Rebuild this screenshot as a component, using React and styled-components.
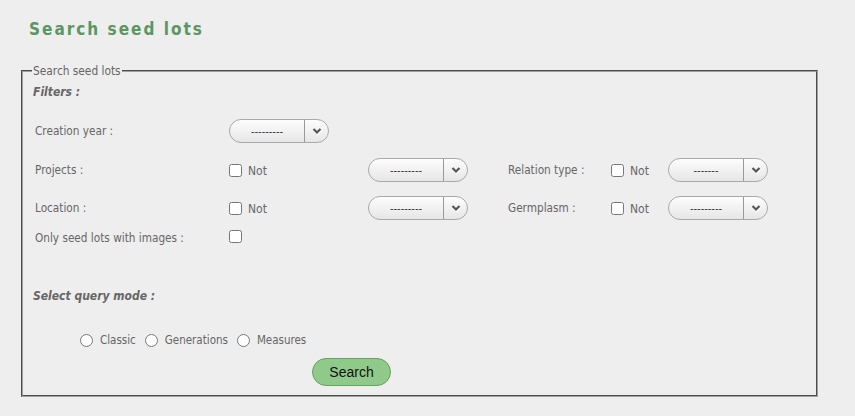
import React from "react";
import styled, { createGlobalStyle } from "styled-components";

const Global = createGlobalStyle`
  html, body { margin: 0; padding: 0; background: #eeeeee; }
  body { font-family: "DejaVu Sans Condensed", "DejaVu Sans", Tahoma, sans-serif; color: #666; }
`;

const Page = styled.div`
  padding: 19px 37px 20px 21px;
`;

const Title = styled.h1`
  margin: 0 0 25px 8px;
  font-family: "DejaVu Sans Condensed", "DejaVu Sans", sans-serif;
  font-size: 17px;
  line-height: 20px;
  font-weight: bold;
  letter-spacing: 2px;
  color: #5b9663;
`;

const Fieldset = styled.fieldset`
  margin: 0;
  padding: 0 10px 9px 10px;
  border: 2px groove #a0a0a0;
  min-width: 0;
`;

const Legend = styled.legend`
  padding: 0 1px;
  margin-left: -1px;
  font-size: 11.8px;
  line-height: 14px;
  color: #666;
`;

const Heading = styled.div`
  margin-top: ${(p) => p.$top}px;
  font-size: 12px;
  line-height: 14px;
  font-weight: bold;
  font-style: italic;
  color: #666;
`;

const FilterRow = styled.div`
  display: grid;
  grid-template-columns: 194px 139px 140px 103px 57px 100px;
  align-items: center;
  height: 24px;
  margin-top: ${(p) => p.$top}px;
  padding-left: 2px;
`;

const Label = styled.span`
  font-size: 11.7px;
  color: #666;
`;

const NotWrap = styled.label`
  display: flex;
  align-items: center;
  gap: 6px;
  font-size: 12px;
  color: #666;
  padding-top: 2px;
`;

const Check = styled.input.attrs({ type: "checkbox" })`
  margin: 0;
  width: 13px;
  height: 13px;
  position: relative;
  top: -1px;
`;

const SelectBox = styled.div`
  display: flex;
  width: 100px;
  height: 24px;
  box-sizing: border-box;
  border: 1px solid #a9a9a9;
  border-radius: 12px;
  background: linear-gradient(#fdfdfd, #e6e6e6);
  overflow: hidden;
`;

const SelectText = styled.div`
  flex: 0 0 74px;
  display: flex;
  align-items: center;
  justify-content: center;
  font-size: 11px;
  color: #333;
  border-right: 1px solid #999;
`;

const SelectArrow = styled.div`
  flex: 1;
  display: flex;
  align-items: center;
  justify-content: center;
`;

const Select = ({ text }) => (
  <SelectBox>
    <SelectText>{text}</SelectText>
    <SelectArrow>
      <svg width="10" height="8" viewBox="0 0 10 8">
        <path d="M1.5 2.5 L5 6 L8.5 2.5" fill="none" stroke="#fff" strokeWidth="2.2" transform="translate(0.6,0.6)" />
        <path d="M1.5 2 L5 5.5 L8.5 2" fill="none" stroke="#555" strokeWidth="2.2" />
      </svg>
    </SelectArrow>
  </SelectBox>
);

const Not = () => (
  <NotWrap>
    <Check />
    Not
  </NotWrap>
);

const RadioRow = styled.div`
  display: flex;
  align-items: center;
  margin-top: 29px;
  margin-left: 47px;
  height: 16px;
`;

const RadioItem = styled.label`
  display: flex;
  align-items: center;
  gap: 7px;
  margin-right: 9px;
  font-size: 11.5px;
  color: #666;
`;

const Radio = styled.input.attrs({ type: "radio", name: "mode" })`
  margin: 0;
  width: 13px;
  height: 13px;
`;

const Button = styled.button`
  display: block;
  margin: 10px 0 0 279px;
  width: 79px;
  height: 28px;
  border: 1px solid #64a360;
  border-radius: 14px;
  background: #8fca8b;
  font-family: "Liberation Sans", Arial, sans-serif;
  font-size: 14px;
  color: #111;
  padding: 0;
`;

export default function App() {
  return (
    <Page>
      <Global />
      <Title>Search seed lots</Title>
      <Fieldset>
        <Legend>Search seed lots</Legend>
        <Heading $top={7}>Filters :</Heading>
        <FilterRow $top={20}>
          <Label>Creation year :</Label>
          <Select text="---------" />
        </FilterRow>
        <FilterRow $top={15}>
          <Label>Projects :</Label>
          <Not />
          <Select text="---------" />
          <Label>Relation type :</Label>
          <Not />
          <Select text="-------" />
        </FilterRow>
        <FilterRow $top={14}>
          <Label>Location :</Label>
          <Not />
          <Select text="---------" />
          <Label>Germplasm :</Label>
          <Not />
          <Select text="---------" />
        </FilterRow>
        <FilterRow $top={6}>
          <Label>Only seed lots with images :</Label>
          <div>
            <Check />
          </div>
        </FilterRow>
        <Heading $top={39}>Select query mode :</Heading>
        <RadioRow>
          <RadioItem>
            <Radio /> Classic
          </RadioItem>
          <RadioItem>
            <Radio /> Generations
          </RadioItem>
          <RadioItem>
            <Radio /> Measures
          </RadioItem>
        </RadioRow>
        <Button>Search</Button>
      </Fieldset>
    </Page>
  );
}
